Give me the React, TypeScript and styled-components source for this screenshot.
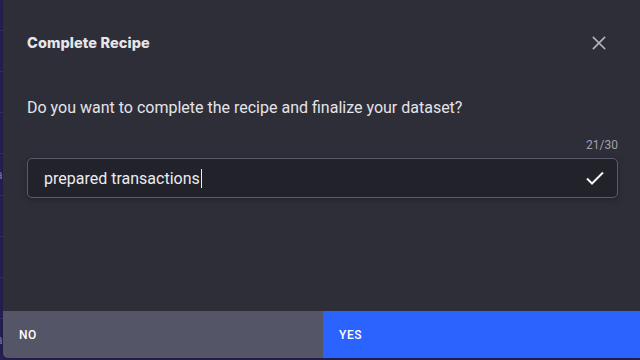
import React from "react";
import styled, { createGlobalStyle } from "styled-components";

const Global = createGlobalStyle`
  html, body { margin: 0; padding: 0; width: 640px; height: 360px; overflow: hidden; }
  body { background: #29235a; font-family: Roboto, "Liberation Sans", sans-serif; }
`;

const Underlay = styled.div`
  position: relative;
  width: 640px;
  height: 360px;
  overflow: hidden;
  background: #29235a;
`;

const BgRows = styled.div`
  position: absolute;
  inset: 0;
  display: flex;
  flex-direction: column;
  padding-top: 30px;
`;

const BgRow = styled.div`
  height: 41px;
  border-top: 1px solid #3b3673;
  font-size: 12px;
  color: #8a84b8;
  line-height: 42px;
  text-indent: -4px;
`;

const Stage = styled.div`
  position: relative;
  padding-left: 3px;
  height: 358px;
`;

const Modal = styled.div`
  width: 640px;
  height: 358px;
  background: #2e2e38;
  border-radius: 0 0 0 5px;
  overflow: hidden;
  display: flex;
  flex-direction: column;
  box-shadow: 0 0 8px rgba(0, 0, 0, 0.4);
`;

const Header = styled.div`
  display: flex;
  align-items: center;
  justify-content: space-between;
  height: 86px;
  padding: 0 36px 0 24px;
  box-sizing: border-box;
`;

const Title = styled.h2`
  margin: 0 0 2px;
  font-family: Inter, Roboto, sans-serif;
  font-weight: 800;
  font-size: 14.5px;
  color: #e6e6ea;
  letter-spacing: 0.1px;
`;

const CloseBtn = styled.button`
  background: none;
  border: none;
  padding: 0;
  width: 16px;
  height: 16px;
  display: flex;
  align-items: center;
  justify-content: center;
  cursor: pointer;
`;

const Body = styled.div`
  flex: 1;
  padding: 0 25px 0 24px;
  display: flex;
  flex-direction: column;
`;

const Question = styled.p`
  margin: 11px 0 0;
  font-size: 16px;
  color: #e4e4e9;
  line-height: 22px;
`;

const Counter = styled.div`
  margin-top: 18px;
  align-self: flex-end;
  font-size: 12px;
  color: #a0a0aa;
  line-height: 16px;
`;

const InputBox = styled.div`
  margin-top: 5px;
  height: 40px;
  box-sizing: border-box;
  width: 591px;
  border: 1px solid #5b5b6b;
  border-radius: 5px;
  background: #22222a;
  display: flex;
  align-items: center;
  padding: 0 12px 0 16px;
  box-shadow: 0 2px 6px rgba(0, 0, 0, 0.25);
`;

const InputText = styled.span`
  flex: 1;
  font-size: 16px;
  color: #ececf0;
  display: flex;
  align-items: center;
`;

const Caret = styled.span`
  display: inline-block;
  width: 1px;
  height: 19px;
  background: #f0f0f0;
  margin-left: 1px;
`;

const Footer = styled.div`
  display: grid;
  grid-template-columns: 320px 320px;
  height: 47px;
`;

const FooterButton = styled.button<{ $primary?: boolean }>`
  border: none;
  margin: 0;
  text-align: left;
  padding: 0 16px;
  background: ${(p) => (p.$primary ? "#2b63ff" : "#545566")};
  color: #ffffff;
  font-family: Roboto, sans-serif;
  font-weight: 500;
  font-size: 12px;
  letter-spacing: 0.6px;
`;

export default function App() {
  const rows = ["", "", "", "a", "", "", "", "a"];
  return (
    <>
      <Global />
      <Underlay>
        <BgRows>
          {rows.map((r, i) => (
            <BgRow key={i}>{r}</BgRow>
          ))}
        </BgRows>
        <Stage>
          <Modal>
            <Header>
              <Title>Complete Recipe</Title>
              <CloseBtn aria-label="close">
                <svg width="14" height="14" viewBox="0 0 14 14">
                  <path d="M1.5 1.5 L12.5 12.5 M12.5 1.5 L1.5 12.5" stroke="#b4b4bc" strokeWidth="1.7" strokeLinecap="square" />
                </svg>
              </CloseBtn>
            </Header>
            <Body>
              <Question>Do you want to complete the recipe and finalize your dataset?</Question>
              <Counter>21/30</Counter>
              <InputBox>
                <InputText>
                  prepared transactions
                  <Caret />
                </InputText>
                <svg width="20" height="16" viewBox="0 0 20 16">
                  <path d="M2 8.5 L7 13.5 L18 2.5" stroke="#f4f4f6" strokeWidth="2" fill="none" />
                </svg>
              </InputBox>
            </Body>
            <Footer>
              <FooterButton>NO</FooterButton>
              <FooterButton $primary>YES</FooterButton>
            </Footer>
          </Modal>
        </Stage>
      </Underlay>
    </>
  );
}
